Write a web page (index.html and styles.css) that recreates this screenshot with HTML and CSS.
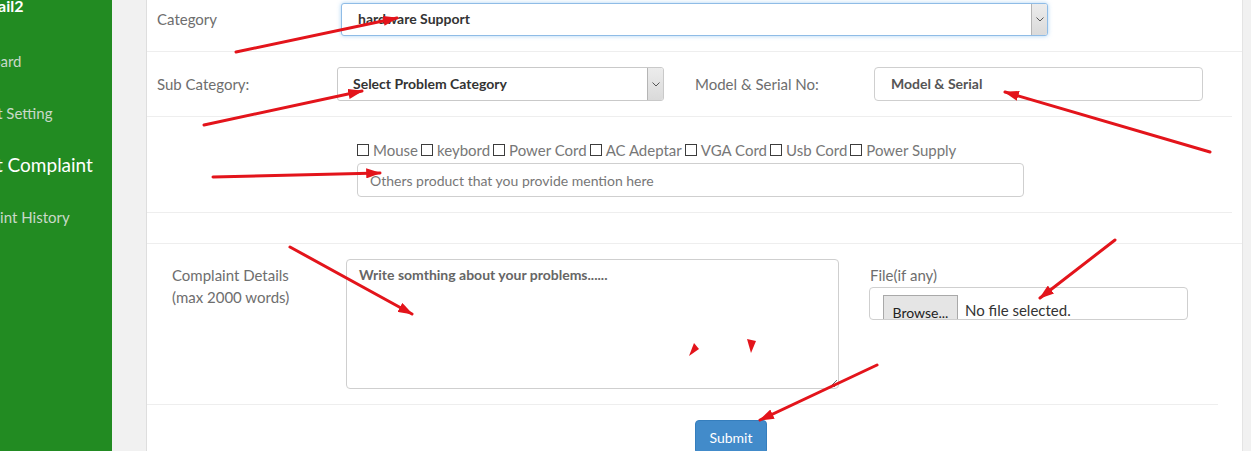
FILE: index.html
```html
<!DOCTYPE html>
<html lang="en">
<head>
<meta charset="utf-8">
<title>Post Complaint</title>
<link rel="stylesheet" href="styles.css">
</head>
<body>
<aside class="sidebar">
  <div class="nav">
    <div class="user">user@email2</div>
    <a class="nav-item dash">Dashboard</a>
    <a class="nav-item acct">Account Setting</a>
    <a class="nav-item post active">Post Complaint</a>
    <a class="nav-item hist">Complaint History</a>
  </div>
</aside>
<main class="main">
  <form class="panel">
    <div class="row row-cat">
      <label class="lbl lbl-cat">Category</label>
      <div class="select select-cat focused">
        <span class="select-value">hardware Support</span>
        <span class="select-arrow"><svg width="8" height="5" viewBox="0 0 8 5"><path d="M0.5 0.5 L4 4 L7.5 0.5" fill="none" stroke="#555" stroke-width="1"/></svg></span>
      </div>
    </div>
    <div class="inner">
      <div class="row row-sub">
        <label class="lbl lbl-sub">Sub Category:</label>
        <div class="select select-sub">
          <span class="select-value">Select Problem Category</span>
          <span class="select-arrow"><svg width="8" height="5" viewBox="0 0 8 5"><path d="M0.5 0.5 L4 4 L7.5 0.5" fill="none" stroke="#555" stroke-width="1"/></svg></span>
        </div>
        <label class="lbl lbl-model">Model &amp; Serial No:</label>
        <input class="input input-model" type="text" value="Model &amp; Serial">
      </div>
      <div class="row row-acc">
        <div class="checks">
          <label class="chk"><input type="checkbox">Mouse</label>
          <label class="chk"><input type="checkbox">keybord</label>
          <label class="chk"><input type="checkbox">Power Cord</label>
          <label class="chk"><input type="checkbox">AC Adeptar</label>
          <label class="chk"><input type="checkbox">VGA Cord</label>
          <label class="chk"><input type="checkbox">Usb Cord</label>
          <label class="chk"><input type="checkbox">Power Supply</label>
        </div>
        <input class="input input-other" type="text" placeholder="Others product that you provide mention here">
      </div>
    </div>
    <div class="spacer"></div>
    <div class="row row-detail">
      <label class="lbl lbl-detail">Complaint Details<br>(max 2000 words)</label>
      <textarea class="textarea" placeholder="Write somthing about your problems......"></textarea>
      <div class="file-col">
        <label class="lbl lbl-file">File(if any)</label>
        <div class="file">
          <span class="file-btn">Browse...</span>
          <span class="file-name">No file selected.</span>
        </div>
      </div>
    </div>
    <div class="row row-submit">
      <button class="btn-submit" type="button">Submit</button>
    </div>
  </form>
</main>
<svg class="annotations" width="1251" height="451" viewBox="0 0 1251 451">
  <defs>
    <marker id="ah" markerWidth="5" markerHeight="3.4" refX="4.6" refY="1.7" orient="auto" markerUnits="strokeWidth">
      <path d="M0,0 L5,1.7 L0,3.4 z" fill="#e3141b"/>
    </marker>
  </defs>
  <g stroke="#e3141b" stroke-width="3" stroke-linecap="round" fill="none">
    <line x1="236" y1="52" x2="397" y2="18" marker-end="url(#ah)"/>
    <line x1="204" y1="125" x2="362" y2="91" marker-end="url(#ah)"/>
    <line x1="213" y1="177" x2="380" y2="173" marker-end="url(#ah)"/>
    <line x1="1210" y1="152" x2="1005" y2="92" marker-end="url(#ah)"/>
    <line x1="290" y1="247" x2="412" y2="314" marker-end="url(#ah)"/>
    <line x1="1115" y1="240" x2="1040" y2="298" marker-end="url(#ah)"/>
    <line x1="877" y1="365" x2="760" y2="420" marker-end="url(#ah)"/>
  </g>
  <g fill="#e3141b">
    <polygon points="694,343 699,349 689,356"/>
    <polygon points="747,339 756,341 751,353"/>
  </g>
</svg>
</body>
</html>
```
FILE: styles.css
```css
* { box-sizing: border-box; }
html, body { margin: 0; padding: 0; }
body {
  width: 1251px;
  height: 451px;
  overflow: hidden;
  display: flex;
  font-family: Lato, "Open Sans", "Liberation Sans", sans-serif;
  position: relative;
}
.sidebar {
  width: 112px;
  flex-shrink: 0;
  background: #228b22;
  overflow: hidden;
}
.nav {
  margin-left: -50px;
  width: 240px;
}
.user {
  color: #fff;
  font-weight: bold;
  font-size: 16px;
  line-height: 20px;
  margin-top: -4px;
  text-indent: -18px;
  white-space: nowrap;
}
.nav-item {
  display: block;
  color: #c9d9c9;
  font-size: 15px;
  line-height: 52px;
  white-space: nowrap;
}
.nav-item:first-of-type { margin-top: 19px; }
.nav-item.active {
  color: #fff;
  font-size: 19px;
}
.dash { text-indent: 0; }
.acct { text-indent: -2px; }
.post { text-indent: 16px; }
.hist { text-indent: 0; }

.main {
  flex: 1;
  background: #f1f1f1;
  padding: 0 8px 0 34px;
}
.panel {
  background: #fff;
  height: 100%;
  border-left: 1px solid #dedede;
  border-right: 1px solid #e4e4e4;
  margin: 0;
}
.row {
  display: flex;
  border-bottom: 1px solid #eeeeee;
}
.lbl {
  color: #6e6e6e;
  font-size: 15px;
}
.row-cat {
  padding: 3px 0 15px 10px;
  align-items: center;
}
.lbl-cat { width: 184px; margin-top: -1px; }
.select {
  display: flex;
  align-items: stretch;
  border: 1px solid #c9c9c9;
  border-radius: 3px;
  background: #fff;
  overflow: hidden;
}
.select-value {
  flex: 1;
  display: flex;
  align-items: center;
  color: #333;
  font-weight: bold;
  font-size: 14px;
  padding-bottom: 2px;
}
.select-arrow {
  width: 16px;
  background: linear-gradient(#ececec, #dadada);
  border-left: 1px solid #b5b5b5;
  display: flex;
  align-items: center;
  justify-content: center;
}
.select-cat {
  width: 707px;
  height: 33px;
}
.select-cat .select-value { padding-left: 16px; }
.select.focused {
  border-color: #8fbce6;
  box-shadow: 0 0 4px rgba(102, 175, 233, 0.55);
}
.inner { margin-right: 10px; }
.row-sub {
  padding: 15px 0 15px 10px;
  align-items: center;
}
.lbl-sub { width: 180px; }
.select-sub {
  width: 327px;
  height: 34px;
}
.select-sub .select-value { padding-left: 15px; }
.lbl-model {
  margin-left: 31px;
  width: 179px;
}
.input {
  font-family: inherit;
  height: 34px;
  border: 1px solid #cfcfcf;
  border-radius: 4px;
  font-size: 14px;
  outline: none;
}
.input-model {
  width: 329px;
  padding-left: 16px;
  padding-bottom: 3px;
  color: #555;
  font-weight: bold;
}
.row-acc {
  flex-direction: column;
  padding: 23px 0 15px 210px;
}
.checks {
  display: flex;
  height: 20px;
  align-items: center;
}
.chk {
  display: flex;
  align-items: center;
  color: #777;
  font-size: 15px;
  margin-right: 3px;
}
.chk input {
  appearance: none;
  -webkit-appearance: none;
  width: 12px;
  height: 12px;
  border: 1px solid #3c3c3c;
  margin: 0 4px 0 0;
  background: #fff;
}
.input-other {
  margin-top: 3px;
  width: 667px;
  padding-left: 12px;
  color: #777;
}
.input-other::placeholder { color: #777; }
.spacer {
  height: 31px;
  border-bottom: 1px solid #eeeeee;
}
.row-detail {
  padding: 15px 0 15px 25px;
  margin-right: 24px;
  align-items: flex-start;
}
.lbl-detail {
  width: 174px;
  line-height: 22px;
  margin-top: 5px;
}
.textarea {
  width: 493px;
  height: 130px;
  border: 1px solid #cfcfcf;
  border-radius: 4px;
  font-family: inherit;
  font-size: 14px;
  font-weight: bold;
  padding: 6px 12px;
  color: #666;
  outline: none;
}
.textarea::placeholder { color: #666; }
.file-col {
  margin-left: 30px;
  display: flex;
  flex-direction: column;
}
.lbl-file {
  line-height: 20px;
  margin-top: 6px;
  margin-left: 1px;
}
.file {
  margin-top: 2px;
  width: 319px;
  height: 33px;
  border: 1px solid #cfcfcf;
  border-radius: 4px;
  display: flex;
  align-items: flex-start;
  overflow: hidden;
  padding-left: 13px;
}
.file-btn {
  margin-top: 7px;
  width: 75px;
  height: 34px;
  flex-shrink: 0;
  background: #e5e5e5;
  border: 1px solid #a9a9a9;
  color: #222;
  font-size: 14px;
  display: flex;
  align-items: center;
  justify-content: center;
}
.file-name {
  margin-left: 7px;
  margin-top: 13px;
  color: #333;
  font-size: 15px;
}
.row-submit {
  border-bottom: none;
  padding: 15px 0 0 548px;
}
.btn-submit {
  width: 72px;
  height: 34px;
  background: #428bca;
  border: 1px solid #357ebd;
  border-radius: 4px;
  color: #fff;
  font-family: inherit;
  font-size: 14px;
}
.annotations {
  position: absolute;
  left: 0;
  top: 0;
  pointer-events: none;
}
```
